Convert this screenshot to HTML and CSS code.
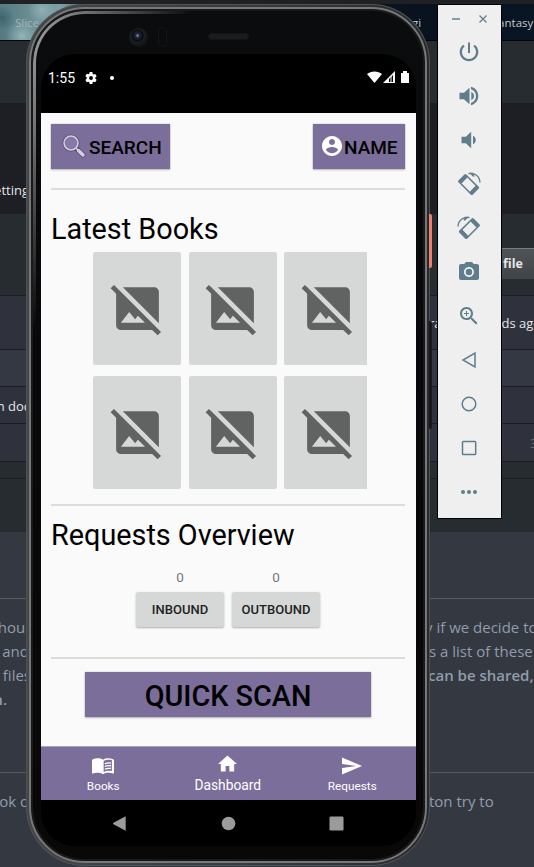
FILE: index.html
```html
<!DOCTYPE html>
<html lang="en">
<head>
<meta charset="utf-8">
<title>Android Emulator</title>
<link rel="stylesheet" href="styles.css">
</head>
<body>
<svg class="defs" aria-hidden="true">
  <symbol id="no-image" viewBox="0 0 24 24"><path d="M21.9 21.9l-8.49-8.49-9.82-9.82L2.1 2.1.69 3.51 3 5.83V19c0 1.1.9 2 2 2h13.17l2.31 2.31 1.42-1.41zM5 18l3.5-4.5 2.5 3.01L12.17 15l3 3H5zm16 .17L5.83 3H19c1.1 0 2 .9 2 2v13.17z"/></symbol>
  <symbol id="rotate" viewBox="0 0 24 24"><path fill-rule="evenodd" d="M7.400 2.400Q8.400 1.500 9.400 2.400L21.800 14.800Q22.600 15.700 21.800 16.600L15.700 22.700Q14.700 23.500 13.800 22.700L1.400 10.300Q.6 9.400 1.400 8.500zM10 5.200L4.200 11 13.200 20 19 14.200z"/><path d="M3.500 9.500L8.800 4.200 10.400 5.600 4.800 11.200zM18.600 13.800L20.500 15.500 14.800 21.200 13 19.600z"/><path d="M11.500 1.700C17.500.3 22.800 4.500 23 10.500" fill="none" stroke="#607d8b" stroke-width="1.300"/><path d="M12 .8h4l1.500 3.500-1.300.4z"/></symbol>
</svg>

<main class="desktop">
  <div class="row strip"></div>
  <div class="row banner"><span class="left">Slice</span><span class="right"><b>gi</b><b class="genre">Fantasy</b></span></div>
  <div class="row slate header"></div>
  <div class="row ink"><span class="left">etting</span></div>
  <div class="row slate tools"><span class="file-btn">file</span></div>
  <div class="row list tall"><span class="left"></span><span class="right"><b>ra</b><b class="ago">ds ago</b></span></div>
  <div class="row list light"></div>
  <div class="row list doc"><span class="left">n doc</span></div>
  <div class="row list count"><span class="left"></span><span class="right"><b class="num">3</b></span></div>
  <div class="row slate thin"></div>
  <div class="row slate foot"></div>
  <section class="readme">
    <hr>
    <div class="line first"><span class="left">shoul</span><span class="right">y if we decide to</span></div>
    <div class="line"><span class="left">and</span><span class="right">s a list of these</span></div>
    <div class="line"><span class="left files">files</span><span class="right strong">can be shared,</span></div>
    <div class="line"><span class="left strong period">n.</span></div>
    <hr class="second">
    <div class="line last"><span class="left">ook o</span><span class="right">ton try to</span></div>
  </section>
</main>

<div class="phone">
  <i class="key power"></i><i class="key volume"></i>
  <div class="bezel">
    <div class="sensors"><i class="camera"></i><i class="proximity"></i><i class="speaker"></i></div>
    <div class="screen">
      <header class="status">
        <span class="time">1:55</span>
        <svg class="gear" viewBox="2 2 20 20"><path d="M19.14 12.94c.04-.3.06-.61.06-.94s-.02-.64-.07-.94l2.03-1.58a.49.49 0 0 0 .12-.61l-1.92-3.32a.49.49 0 0 0-.59-.22l-2.39.96a7 7 0 0 0-1.62-.94l-.36-2.54A.48.48 0 0 0 13.92 2h-3.84a.48.48 0 0 0-.47.41l-.36 2.54c-.59.24-1.13.57-1.62.94l-2.39-.96a.48.48 0 0 0-.59.22L2.73 8.47a.48.48 0 0 0 .12.61l2.03 1.58a7 7 0 0 0 0 2.68L2.85 14.92a.49.49 0 0 0-.12.61l1.92 3.32c.12.22.37.29.59.22l2.39-.96c.5.38 1.03.7 1.62.94l.36 2.54c.05.24.24.41.48.41h3.84c.24 0 .44-.17.47-.41l.36-2.54c.59-.24 1.13-.56 1.62-.94l2.39.96c.22.08.47 0 .59-.22l1.92-3.32a.48.48 0 0 0-.12-.61zM12 15.2a3.2 3.2 0 1 1 0-6.4 3.2 3.2 0 0 1 0 6.4z"/></svg>
        <i class="dot"></i>
        <svg class="signals" viewBox="0 0 43 13"><path d="M0 3C4-.5 11-.5 15 3L7.500 12zM16 12L28 0V12z"/><path d="M22 11V8l4-4v7z" fill="#000"/><path d="M23.500 5h1v7h-1z"/><path d="M34 2h2V0h4v2h2v10h-8z"/></svg>
      </header>
      <div class="app">
        <div class="top">
          <button class="violet search"><svg viewBox="0 0 24 24"><circle cx="9" cy="9" r="7" fill="none" stroke="#534b69" stroke-width="3.200"/><path d="M14 14l7 7" stroke="#534b69" stroke-width="5" stroke-linecap="round"/><circle cx="9" cy="9" r="7" fill="#8779a7" stroke="#d3cddf" stroke-width="1.600"/><path d="M14 14l3 3" stroke="#d3cddf" stroke-width="1.600"/><path d="M16.500 16.500l4.500 4.500" stroke="#d3cddf" stroke-width="3.500" stroke-linecap="round"/></svg>SEARCH</button>
          <button class="violet name"><svg viewBox="2 2 20 20"><path fill="#fff" d="M12 2C6.480 2 2 6.480 2 12s4.480 10 10 10 10-4.480 10-10S17.520 2 12 2zm0 3c1.660 0 3 1.340 3 3s-1.340 3-3 3-3-1.340-3-3 1.340-3 3-3zm0 14.200c-2.500 0-4.710-1.280-6-3.220.03-1.990 4-3.080 6-3.080 1.990 0 5.970 1.090 6 3.080-1.290 1.940-3.500 3.220-6 3.220z"/></svg>NAME</button>
        </div>
        <div class="divider"></div>
        <h1 class="latest">Latest Books</h1>
        <div class="books">
          <div class="book"><svg><use href="#no-image"/></svg></div>
          <div class="book"><svg><use href="#no-image"/></svg></div>
          <div class="book"><svg><use href="#no-image"/></svg></div>
          <div class="book"><svg><use href="#no-image"/></svg></div>
          <div class="book"><svg><use href="#no-image"/></svg></div>
          <div class="book"><svg><use href="#no-image"/></svg></div>
        </div>
        <div class="divider mid"></div>
        <h1 class="overview">Requests Overview</h1>
        <div class="requests">
          <div class="req"><span>0</span><button>INBOUND</button></div>
          <div class="req"><span>0</span><button>OUTBOUND</button></div>
        </div>
        <div class="divider low"></div>
        <button class="violet scan">QUICK SCAN</button>
      </div>
      <nav class="tabs">
        <div class="tab"><svg class="i-book" viewBox="0 0 24 18"><path fill="#fff" d="M12 2.200C9 .3 4.500.2 1 1.500 .3 1.800 0 2.200 0 3v13.500c0 .6.500.9 1 .7 3.500-1.200 8-1 11 .8 3-1.800 7.500-2 11-.8.5.2 1-.1 1-.7V3c0-.8-.3-1.200-1-1.500C19.500.2 15 .3 12 2.200z"/><path d="M12.700 3.500c2.500-1.500 6-1.800 9-1v12c-3-.7-6.500-.4-9 1z" fill="#7b6e9a"/><path d="M14 6.700c2-1 4.500-1.200 6.800-.8M14 9.600c2-1 4.500-1.200 6.800-.8M14 12.500c2-1 4.500-1.200 6.800-.8" fill="none" stroke="#fff" stroke-width="1.400"/></svg><span>Books</span></div>
        <div class="tab active"><svg class="i-home" viewBox="2 3 20 17"><path fill="#fff" d="M10 20v-6h4v6h5v-8h3L12 3 2 12h3v8z"/></svg><span>Dashboard</span></div>
        <div class="tab"><svg class="i-send" viewBox="2 3 21 18"><path fill="#fff" d="M2.010 21L23 12 2.010 3 2 10l15 2-15 2z"/></svg><span>Requests</span></div>
      </nav>
      <footer class="system">
        <div><svg viewBox="0 0 16 16"><path d="M13.500.3V15.700L.5 8.700q-1-.7 0-1.400z"/></svg></div>
        <div><svg viewBox="0 0 16 16"><circle cx="8" cy="8" r="7.300"/></svg></div>
        <div><svg viewBox="0 0 16 16"><rect x=".5" y=".5" width="15" height="15" rx="1.500"/></svg></div>
      </footer>
    </div>
  </div>
</div>

<aside class="toolbar">
  <div class="window"><svg viewBox="0 0 8 8"><path d="M0 4h8" stroke-width="1.500"/></svg><svg viewBox="0 0 8 8"><path d="M.5.5l7 7m0-7l-7 7" stroke-width="1.400"/></svg></div>
  <div class="tool"><svg viewBox="0 0 24 24"><path d="M13 2.500h-2v10.500h2zM17.830 4.800l-1.500 1.800C17.990 7.860 19 9.810 19 12c0 3.870-3.130 7-7 7s-7-3.130-7-7c0-2.190 1.010-4.140 2.680-5.400L6.170 4.800C4.030 6.420 2.700 9.060 2.700 12c0 5.100 4.200 9.300 9.300 9.300s9.300-4.200 9.300-9.300c0-2.940-1.330-5.580-3.470-7.200z"/></svg></div>
  <div class="tool"><svg viewBox="0 0 24 24"><path d="M2.500 8.700v6.600h4.500l5.500 5V3.700L7 8.700zm14.500 3.300c0-1.770-1.020-3.290-2.700-4.200v8.400c1.680-.91 2.700-2.430 2.700-4.200zM14 2.800v2.400c2.890.86 5 3.540 5 6.800s-2.110 5.940-5 6.800v2.400c4.210-.91 7.300-4.590 7.300-9.200S18.210 3.710 14 2.800z"/></svg></div>
  <div class="tool"><svg viewBox="0 0 24 24"><path d="M18.800 12c0-1.770-1.120-3.390-2.800-4.230v8.450c1.680-.83 2.800-2.450 2.800-4.220zM4.500 8.700v6.600h4.300l5.400 5V3.700l-5.400 5z"/></svg></div>
  <div class="tool"><svg class="rot" viewBox="0 0 24 24"><use href="#rotate"/></svg></div>
  <div class="tool"><svg class="rot flip" viewBox="0 0 24 24"><use href="#rotate"/></svg></div>
  <div class="tool"><svg viewBox="0 0 24 24"><circle cx="12" cy="12" r="3.200"/><path d="M9 2L7.170 4H4c-1.100 0-2 .9-2 2v12c0 1.100.9 2 2 2h16c1.100 0 2-.9 2-2V6c0-1.100-.9-2-2-2h-3.170L15 2H9zm3 15c-2.760 0-5-2.240-5-5s2.240-5 5-5 5 2.240 5 5-2.240 5-5 5z"/></svg></div>
  <div class="tool"><svg viewBox="0 0 24 24"><path d="M15.500 14h-.79l-.28-.27C15.410 12.590 16 11.110 16 9.500 16 5.910 13.090 3 9.500 3S3 5.910 3 9.500 5.910 16 9.500 16c1.610 0 3.090-.59 4.230-1.570l.27.28v.79l5 4.990L20.490 19l-4.990-5zm-6 0C7.010 14 5 11.990 5 9.500S7.010 5 9.500 5 14 7.010 14 9.500 11.990 14 9.500 14zm2.500-4h-2v2H9v-2H7V9h2V7h1v2h2v1z"/></svg></div>
  <div class="tool outline"><svg viewBox="0 0 24 24"><path d="M18 5v14L6 12z"/></svg></div>
  <div class="tool outline"><svg viewBox="0 0 24 24"><circle cx="12" cy="12" r="6.800"/></svg></div>
  <div class="tool outline"><svg viewBox="0 0 24 24"><rect x="5.500" y="5.500" width="13.200" height="13" rx=".8"/></svg></div>
  <div class="tool"><svg viewBox="0 0 24 24"><circle cx="6" cy="12" r="2"/><circle cx="12" cy="12" r="2"/><circle cx="18" cy="12" r="2"/></svg></div>
</aside>
</body>
</html>
```

FILE: styles.css
```css
* { box-sizing: border-box; }
body { margin: 0; width: 534px; height: 867px; overflow: hidden; position: relative; background: #343841; font-family: "Open Sans", "Noto Sans", sans-serif; }
b { font-weight: inherit; }
.defs { display: none; }
button { border: 0; padding: 0; font-family: Roboto, sans-serif; }

/* page behind the emulator */
.desktop { height: 867px; overflow: hidden; color: #e4e6e8; font-size: 13px; }
.row { display: flex; align-items: center; white-space: nowrap; overflow: hidden; }
.left { width: 29px; flex: none; display: flex; justify-content: flex-end; overflow: hidden; }
.right { margin-left: 400px; display: flex; flex: 1; overflow: hidden; }
.strip { height: 4px; background: #202124; }
.banner { height: 37px; border-bottom: 1px solid #000; font-size: 11.5px; color: #a9b0b5;
  background: radial-gradient(circle at 22px 32px, #94b4b8 0, transparent 16px), radial-gradient(circle at 2px 14px, #3d666c 0, transparent 12px), radial-gradient(circle at 42px 6px, #8fb0b4 0, transparent 14px), linear-gradient(90deg, #547b82 0, #7da0a5 60px, #101d28 120px, #08131f 420px, #081522); }
.banner .left { width: 39px; color: #a3b4b7; }
.banner .right { margin-left: 373px; color: #c3c8cb; }
.genre { margin-left: 71px; }
.slate { background: #262c2f; }
.header { height: 62px; }
.ink { height: 111px; background: #1e1f25; padding-top: 63px; }
.tools { height: 81px; justify-content: flex-end; padding-top: 18px; }
.file-btn { width: 54px; height: 31px; padding-left: 23px; line-height: 30px; font-size: 12.5px; font-weight: 700; background: linear-gradient(#505355, #414446); border-top: 1px solid #777b7d; }
.list { background: #2f323d; border-top: 1px solid #191d22; }
.tall { height: 54px; }
.ago { margin-left: 60px; }
.light { height: 37px; background: #343842; }
.doc { height: 37px; padding-top: 2px; }
.doc .left { width: 30px; }
.count { height: 38px; }
.num { margin-left: 101px; color: #646a75; }
.thin { height: 17px; border-top: 1px solid #191d22; }
.foot { height: 54px; border-top: 1px solid #191d22; }
.readme { color: #919cad; font-size: 15px; padding-top: 66px; }
.readme hr { margin: 0; border: 0; height: 1px; background: #5b5a58; }
.line { height: 24px; line-height: 22px; display: flex; white-space: nowrap; overflow: hidden; }
.line.first { margin-top: 17px; }
.line.first .right { margin-left: 396px; }
.files { width: 31px; }
.files + .right { margin-left: 397px; }
.strong { font-weight: 600; }
.period { width: 7px; }
.readme .second { margin-top: 60px; }
.line.last { margin-top: 17px; }

/* device frame */
.phone { position: absolute; left: 26px; top: 4px; width: 404px; height: 862px; padding: 3px; border-radius: 59px; background: linear-gradient(90deg, #444547, #3b3c3e 50%, #29292a); box-shadow: inset 0 0 0 1px #505253; }
.bezel { position: relative; height: 856px; border: 2px solid #77787a; border-radius: 56px; background: linear-gradient(#0b0c0e, #08080a 40%, #0a0707); padding: 0 8px 0 10px; box-shadow: inset 0 0 0 2px #18191b; }
.bezel::before { content: ""; position: absolute; inset: 2px; border: 3px solid #9a9b9c; border-right: 0; border-bottom: 0; border-radius: 52px; -webkit-mask-image: radial-gradient(ellipse 160px 300px at 0 20px, #000 0, rgba(0,0,0,.75) 30%, transparent 100%); mask-image: radial-gradient(ellipse 160px 300px at 0 20px, #000 0, rgba(0,0,0,.75) 30%, transparent 100%); }
.key { position: absolute; left: 403px; width: 3px; border-radius: 0 2px 2px 0; }
.power { top: 210px; height: 54px; background: #ed806d; }
.volume { top: 317px; height: 108px; background: #171819; }
.sensors { height: 45px; position: relative; }
.camera { position: absolute; left: 88px; top: 19px; width: 19px; height: 19px; border-radius: 50%; background: radial-gradient(circle at 45% 40%, #8b98b8 0, #232840 2px, #0c0d13 5px, #1c1d1f 7px, #141517 10px); }
.proximity { position: absolute; left: 117px; top: 18px; width: 9px; height: 20px; border-radius: 5px; border: 1px solid #141517; }
.speaker { position: absolute; left: 167px; top: 24px; width: 41px; height: 7px; border-radius: 3px; background: #1c1c1d; border: 1px solid #141415; }
.screen { position: relative; width: 375px; height: 792px; border-radius: 34px; overflow: hidden; background: #000; font-family: Roboto, sans-serif; }
.status { height: 59px; display: flex; align-items: center; padding: 0 6px 12px 7px; color: #fff; font-size: 14px; }
.status svg { fill: #fff; }
.time { width: 26px; }
.gear { width: 12px; height: 12px; margin-left: 10.500px; }
.dot { width: 4px; height: 4px; border-radius: 50%; background: #fff; margin-left: 13px; }
.signals { width: 43px; height: 13px; margin-left: auto; }

/* app */
.app { height: 633px; background: #fafafa; padding: 11px 11px 0 10px; color: #000; }
.top { display: flex; justify-content: space-between; }
.violet { background: #7b6e9a; color: #000; display: flex; align-items: center; font-weight: 500; box-shadow: 0 0 1px rgba(123,110,154,.6), 0 1px 2px rgba(0,0,0,.25); }
.search { width: 119px; height: 45px; padding: 1px 0 0 11px; font-size: 19px; }
.search svg { width: 24px; height: 24px; margin: 0 3px 2px 0; }
.name { width: 92px; height: 45px; padding: 1px 0 0 9px; font-size: 19px; }
.name svg { width: 20px; height: 20px; margin: 0 2px 2px 0; }
.divider { height: 2px; margin-top: 19px; background: #dcdcdc; }
h1 { margin: 0; font-weight: 400; font-size: 28.800px; line-height: 34px; white-space: nowrap; }
.latest { margin-top: 22px; }
.books { width: 274px; margin: 6px auto 0 42px; overflow: hidden; display: grid; grid-template-columns: repeat(3, 88px); column-gap: 7.500px; row-gap: 11px; }
.book { height: 113px; background: #d6d8d7; border-radius: 2px; display: grid; place-items: center; }
.book svg { width: 57px; height: 57px; fill: #616362; }
.divider.mid { margin-top: 15px; }
.overview { margin-top: 12px; }
.requests { display: flex; justify-content: center; gap: 8px; margin-top: 17px; }
.req { width: 88px; display: flex; flex-direction: column; align-items: center; color: #777; font-size: 13.500px; line-height: 16px; }
.req button { width: 88px; height: 35px; margin-top: 7px; background: #d6d8d7; border-radius: 2px; font-size: 13px; font-weight: 500; color: #222; box-shadow: 0 1px 2px rgba(0,0,0,.3); }
.divider.low { margin-top: 30px; }
.scan { width: 286px; height: 45px; margin: 13px 0 0 34px; padding-top: 2px; justify-content: center; font-size: 28.800px; }
.tabs { height: 54px; background: #7b6e9a; display: grid; grid-template-columns: repeat(3, 124.500px); border-top: 1px solid #a9a2bc; color: #fff; }
.tab { display: flex; flex-direction: column; align-items: center; font-size: 11.800px; line-height: 14px; padding-top: 10px; }
.tab svg { height: 18px; margin-bottom: 4px; }
.i-book { width: 22px; }
.i-send { width: 20px; }
.tab.active { font-size: 13.800px; padding-top: 8px; }
.i-home { width: 19px; }
.active svg { height: 17px; margin-bottom: 6px; }
.system { height: 46px; display: grid; grid-template-columns: repeat(3, 108px); justify-content: center; align-items: center; }
.system div { display: grid; place-items: center; }
.system svg { width: 15px; height: 15px; fill: #9b9b9b; }

/* emulator controls */
.toolbar { position: absolute; left: 437px; top: 4px; width: 65px; height: 515px; background: #efefef; border: 1px solid #000; }
.window { height: 25px; display: flex; justify-content: space-between; padding: 10px 14px 0 14px; }
.window svg { width: 8px; height: 8px; stroke: #688390; fill: none; overflow: visible; }
.tool { height: 44px; display: grid; place-items: center; padding-right: 1px; }
.tool svg { width: 24px; height: 24px; fill: #607d8b; }
.outline svg { fill: none; stroke: #607d8b; stroke-width: 1.500; }
.rot.flip { transform: scaleX(-1); }
```
